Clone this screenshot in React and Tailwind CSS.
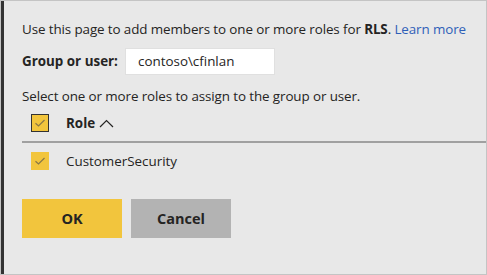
import React from "react";

function Check() {
  return (
    <svg width="12" height="10" viewBox="0 0 12 10" fill="none">
      <path d="M1.5 5.2 L4.5 8 L10.5 2" stroke="#8a7846" strokeWidth="1.2" />
    </svg>
  );
}

export default function App() {
  return (
    <div
      className="w-[487px] h-[275px] bg-[#e8e8e8] border border-[#c4c4c4] flex text-[#252423]"
      style={{ fontFamily: '"Open Sans", "Liberation Sans", sans-serif' }}
    >
      <div className="w-[3px] bg-[#333333] shrink-0" />
      <div className="flex-1 flex flex-col pl-[18px] pt-[18px]">
        <div className="text-[13.4px] leading-[20px] tracking-[-0.1px] whitespace-nowrap">
          Use this page to add members to one or more roles for <b>RLS</b>.{" "}
          <span className="text-[#2f5fb8]">Learn more</span>
        </div>
        <div className="flex items-center mt-[9px] h-[27px]">
          <span className="font-bold text-[13.4px] w-[103px]">Group or user:</span>
          <div className="w-[150px] h-[27px] bg-white border border-[#e0e0e0] flex items-center pl-[12px] text-[13.4px]">
            contoso\cfinlan
          </div>
        </div>
        <div className="text-[13.4px] leading-[20px] mt-[11px] whitespace-nowrap tracking-[-0.1px]">
          Select one or more roles to assign to the group or user.
        </div>
        <div className="flex items-center h-[18px] mt-[8px] pl-[9px]">
          <div className="w-[18px] h-[18px] bg-[#f2c53d] border border-[#333] flex items-center justify-center">
            <Check />
          </div>
          <span className="font-bold text-[13.4px] ml-[17px]">Role</span>
          <svg width="15" height="9" viewBox="0 0 15 9" className="ml-[4px]" fill="none">
            <path d="M1 8 L7.5 1.5 L14 8" stroke="#252423" strokeWidth="1.2" />
          </svg>
        </div>
        <div className="h-[2px] bg-[#a0a0a0] mt-[9px]" />
        <div className="flex items-center h-[18px] mt-[9px] pl-[9px]">
          <div className="w-[18px] h-[18px] bg-[#f2c53d] flex items-center justify-center">
            <Check />
          </div>
          <span className="text-[13.4px] ml-[17px]">CustomerSecurity</span>
        </div>
        <div className="flex gap-[9px] mt-[29px]">
          <button className="w-[100px] h-[39px] bg-[#f2c53d] font-bold text-[14.5px] text-[#252423]">OK</button>
          <button className="w-[100px] h-[39px] bg-[#b3b3b3] font-bold text-[14.5px] text-[#252423]">Cancel</button>
        </div>
      </div>
    </div>
  );
}
